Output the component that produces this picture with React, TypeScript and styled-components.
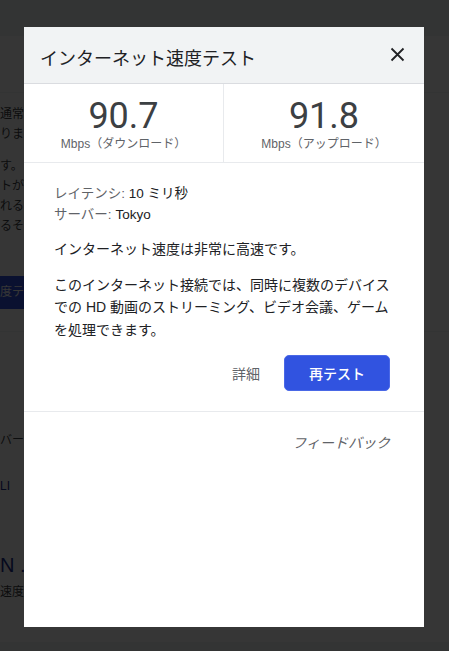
import React from 'react';
import styled, { createGlobalStyle } from 'styled-components';

const GlobalStyle = createGlobalStyle`
  html, body {
    margin: 0;
    padding: 0;
    height: 100%;
    overflow: hidden;
  }
  body {
    font-family: "Liberation Sans", "Noto Sans CJK JP", sans-serif;
    color: #202124;
    background: #f1f3f4;
  }
`;

const Page = styled.div`
  height: 651px;
  display: flex;
  flex-direction: column;
  font-size: 12px;
  line-height: 20px;
`;

const PageHeader = styled.div`
  height: 36px;
  border-bottom: 1px solid #ffffff;
`;

const PageSection = styled.div<{ $top?: number; $bottom?: number }>`
  background: #ffffff;
  padding: ${p => p.$top ?? 12}px 0 ${p => p.$bottom ?? 12}px;
  border-bottom: 1px solid #f1f3f4;
`;

const PageText = styled.div<{ $color?: string; $size?: number; $gap?: number }>`
  color: ${p => p.$color ?? '#3c4043'};
  font-size: ${p => p.$size ?? 12}px;
  line-height: ${p => ((p.$size ?? 12) > 16 ? 26 : 20)}px;
  margin-top: ${p => p.$gap ?? 0}px;
  white-space: nowrap;
`;

const PageButton = styled.div`
  margin-top: 40px;
  width: 24px;
  height: 33px;
  overflow: hidden;
  background: #3153e0;
  color: #fff;
  line-height: 33px;
  white-space: nowrap;
  font-size: 12px;
`;

const Overlay = styled.div`
  position: fixed;
  inset: 0;
  background: rgba(0, 0, 0, 0.79);
  display: flex;
  justify-content: flex-start;
  align-items: flex-start;
  padding: 27px 0 0 24px;
`;

const Dialog = styled.div`
  width: 400px;
  height: 600px;
  background: #ffffff;
  display: flex;
  flex-direction: column;
`;

const Header = styled.div`
  height: 56px;
  background: #f1f3f4;
  border-bottom: 1px solid #dadce0;
  display: flex;
  align-items: center;
  justify-content: space-between;
  padding: 0 19px 0 16px;
`;

const Title = styled.h1`
  margin: 0;
  font-size: 18px;
  font-weight: 400;
  color: #202124;
  font-family: "Noto Sans CJK JP", sans-serif;
  padding-top: 4px;
`;

const CloseButton = styled.button`
  border: 0;
  background: none;
  padding: 0;
  width: 16px;
  height: 16px;
  display: flex;
  align-items: center;
  justify-content: center;
  cursor: pointer;
  margin-top: -2px;
`;

const Speeds = styled.div`
  display: grid;
  grid-template-columns: 1fr 1fr;
  border-bottom: 1px solid #e8eaed;
`;

const SpeedCell = styled.div<{ $divider?: boolean }>`
  height: 78px;
  display: flex;
  flex-direction: column;
  align-items: center;
  justify-content: center;
  gap: 2px;
  border-right: ${p => (p.$divider ? '1px solid #e8eaed' : '0')};
`;

const SpeedValue = styled.div`
  font-family: Roboto, "Liberation Sans", sans-serif;
  font-size: 36px;
  line-height: 38px;
  color: #3c4043;
  margin-top: 2px;
`;

const SpeedLabel = styled.div`
  font-size: 12px;
  line-height: 14px;
  color: #5f6368;
`;

const Body = styled.div`
  padding: 20px 32px 20px 30px;
  border-bottom: 1px solid #e8eaed;
`;

const InfoLine = styled.div`
  font-size: 13.5px;
  line-height: 21px;
  color: #202124;
`;

const InfoKey = styled.span`
  color: #5f6368;
`;

const Paragraph = styled.p<{ $gap?: number }>`
  margin: ${p => p.$gap ?? 13}px 0 0;
  font-size: 14px;
  line-height: 22.5px;
  color: #202124;
`;

const Actions = styled.div`
  display: flex;
  justify-content: flex-end;
  align-items: center;
  gap: 24px;
  margin-top: 14px;
  padding-right: 2px;
`;

const TextButton = styled.button`
  border: 0;
  background: none;
  padding: 0;
  font: inherit;
  font-size: 14px;
  color: #5f6368;
  cursor: pointer;
`;

const PrimaryButton = styled.button`
  width: 106px;
  height: 36px;
  border: 1px solid #4a68e6;
  border-radius: 5px;
  background: #3153e0;
  color: #ffffff;
  font: inherit;
  font-size: 14px;
  font-weight: 500;
  cursor: pointer;
`;

const Footer = styled.div`
  display: flex;
  justify-content: flex-end;
  padding: 20px 34px 0 30px;
`;

const FeedbackLink = styled.a`
  font-size: 14px;
  font-style: italic;
  color: #5f6368;
  cursor: pointer;
`;

function CloseIcon() {
  return (
    <svg width="15" height="15" viewBox="0 0 15 15">
      <path d="M1.5 1.5 L13.5 13.5 M13.5 1.5 L1.5 13.5" stroke="#202124" strokeWidth="1.8" fill="none" />
    </svg>
  );
}

function Background() {
  return (
    <Page>
      <PageHeader />
      <PageSection $top={18} $bottom={17}>
        <PageText>&nbsp;</PageText>
      </PageSection>
      <PageSection $top={11} $bottom={22}>
        <PageText>通常</PageText>
        <PageText>りま</PageText>
        <PageText $gap={12}>す。</PageText>
        <PageText>トが</PageText>
        <PageText>れる</PageText>
        <PageText>るそ</PageText>
        <PageButton>度テ</PageButton>
      </PageSection>
      <PageSection $top={98} $bottom={40}>
        <PageText>バー</PageText>
        <PageText $color="#1a2a8a" $gap={26}>LI</PageText>
        <PageText $color="#1a2a8a" $size={20} $gap={56}>N .</PageText>
        <PageText $gap={4}>速度</PageText>
      </PageSection>
    </Page>
  );
}

export default function App() {
  return (
    <>
      <GlobalStyle />
      <Background />
      <Overlay>
        <Dialog>
          <Header>
            <Title>インターネット速度テスト</Title>
            <CloseButton aria-label="閉じる">
              <CloseIcon />
            </CloseButton>
          </Header>
          <Speeds>
            <SpeedCell $divider>
              <SpeedValue>90.7</SpeedValue>
              <SpeedLabel>Mbps（ダウンロード）</SpeedLabel>
            </SpeedCell>
            <SpeedCell>
              <SpeedValue>91.8</SpeedValue>
              <SpeedLabel>Mbps（アップロード）</SpeedLabel>
            </SpeedCell>
          </Speeds>
          <Body>
            <InfoLine>
              <InfoKey>レイテンシ: </InfoKey>10 ミリ秒
            </InfoLine>
            <InfoLine>
              <InfoKey>サーバー: </InfoKey>Tokyo
            </InfoLine>
            <Paragraph>インターネット速度は非常に高速です。</Paragraph>
            <Paragraph>
              このインターネット接続では、同時に複数のデバイス
              <br />
              での HD 動画のストリーミング、ビデオ会議、ゲーム
              <br />
              を処理できます。
            </Paragraph>
            <Actions>
              <TextButton>詳細</TextButton>
              <PrimaryButton>再テスト</PrimaryButton>
            </Actions>
          </Body>
          <Footer>
            <FeedbackLink>フィードバック</FeedbackLink>
          </Footer>
        </Dialog>
      </Overlay>
    </>
  );
}
